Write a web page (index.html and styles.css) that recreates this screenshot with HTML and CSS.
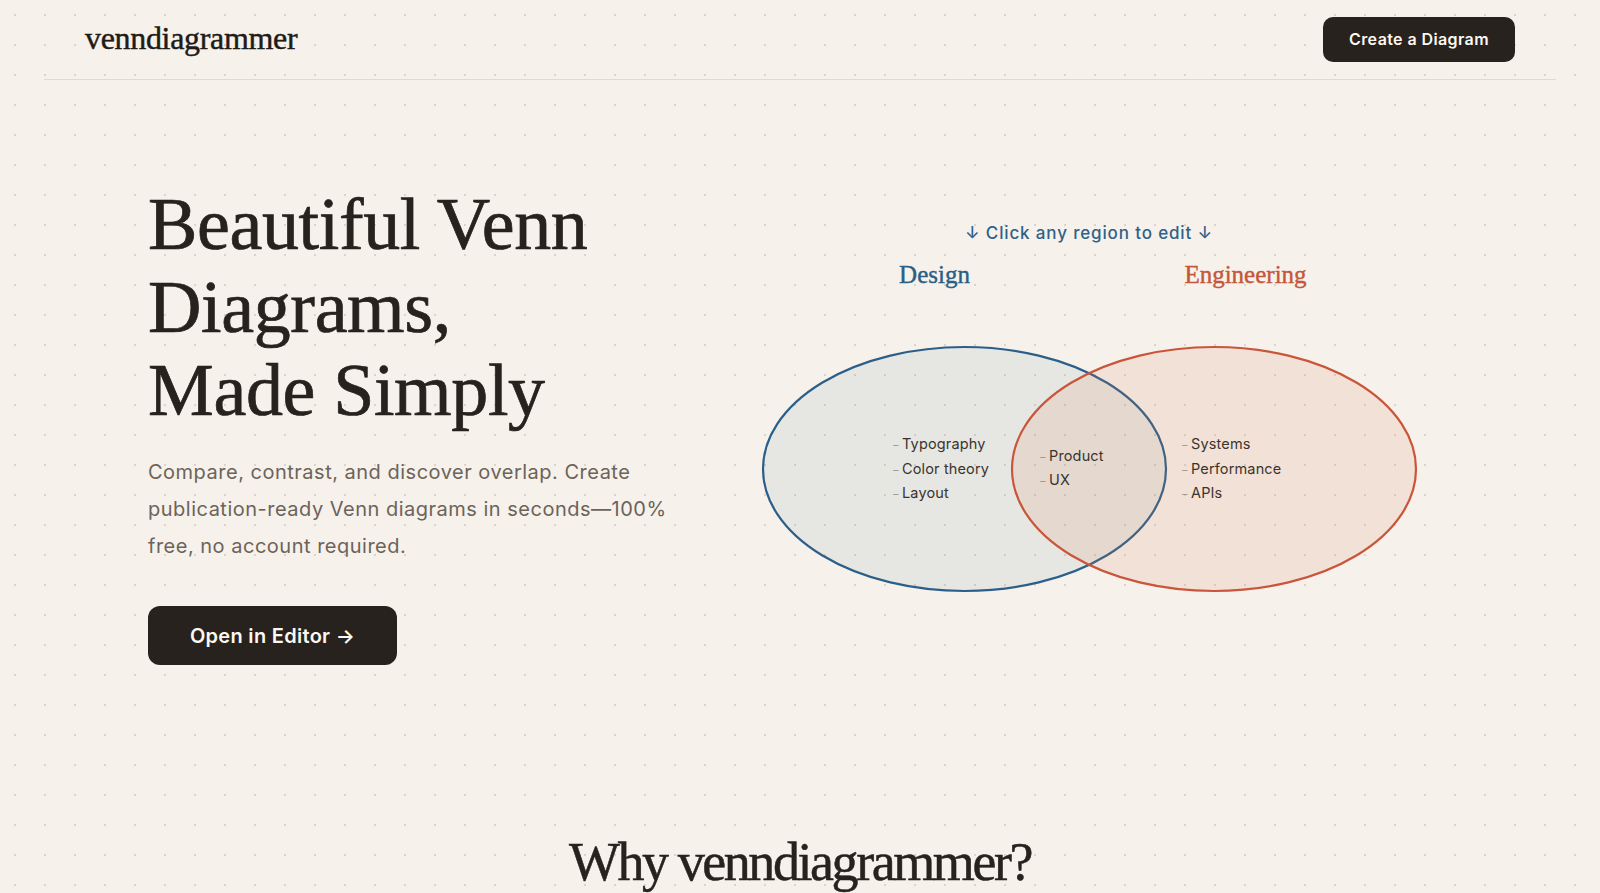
FILE: index.html
```html
<!DOCTYPE html>
<html lang="en">
<head>
<meta charset="utf-8">
<title>venndiagrammer</title>
<link rel="stylesheet" href="styles.css">
</head>
<body>
<header class="topbar">
  <a class="logo" href="#">venndiagrammer</a>
  <a class="btn btn-nav" href="#">Create a Diagram</a>
</header>

<main>
  <section class="hero">
    <div class="hero-copy">
      <h1 class="hero-title">Beautiful Venn<br>Diagrams,<br>Made Simply</h1>
      <p class="hero-text">Compare, contrast, and discover overlap. Create publication-ready Venn diagrams in seconds—100% free, no account required.</p>
      <a class="btn btn-hero" href="#">Open in Editor →</a>
    </div>
    <div class="hero-diagram">
      <p class="diagram-hint">↓ Click any region to edit ↓</p>
      <svg class="venn" viewBox="0 0 728 360" width="728" height="360" aria-label="Venn diagram">
        <text class="set-label set-a" x="209.5" y="33" text-anchor="middle">Design</text>
        <text class="set-label set-b" x="520.5" y="33" text-anchor="middle">Engineering</text>
        <ellipse class="circle-a" cx="239.5" cy="219" rx="201.5" ry="122"/>
        <ellipse class="circle-b" cx="489" cy="219" rx="202" ry="122"/>
        <g class="items">
          <text x="168" y="199"><tspan class="dash">–</tspan><tspan x="177">Typography</tspan></text>
          <text x="168" y="224"><tspan class="dash">–</tspan><tspan x="177">Color theory</tspan></text>
          <text x="168" y="248"><tspan class="dash">–</tspan><tspan x="177">Layout</tspan></text>
          <text x="315" y="211"><tspan class="dash">–</tspan><tspan x="324">Product</tspan></text>
          <text x="315" y="235"><tspan class="dash">–</tspan><tspan x="324">UX</tspan></text>
          <text x="457" y="199"><tspan class="dash">–</tspan><tspan x="466">Systems</tspan></text>
          <text x="457" y="224"><tspan class="dash">–</tspan><tspan x="466">Performance</tspan></text>
          <text x="457" y="248"><tspan class="dash">–</tspan><tspan x="466">APIs</tspan></text>
        </g>
      </svg>
    </div>
  </section>

  <section class="why">
    <h2 class="why-title">Why venndiagrammer?</h2>
  </section>
</main>
</body>
</html>
```

FILE: styles.css
```css
* { box-sizing: border-box; }

html, body {
  margin: 0;
  padding: 0;
}

body {
  background-color: #f6f1eb;
  background-image: radial-gradient(circle at center, #dcd4ca 0.9px, rgba(220, 212, 202, 0) 1.4px);
  background-size: 30px 30px;
  background-position: 0 0;
  color: #27221d;
  font-family: "Inter", "Liberation Sans", sans-serif;
  overflow: hidden;
  height: 893px;
}

a { text-decoration: none; }

.topbar {
  margin: 0 44px;
  height: 80px;
  padding: 0 41px;
  border-bottom: 1px solid #e1dad1;
  display: flex;
  align-items: center;
  justify-content: space-between;
}

.logo {
  font-family: "Liberation Serif", "Times New Roman", serif;
  font-size: 32px;
  color: #1f1b17;
  letter-spacing: -0.01em;
  -webkit-text-stroke: 0.45px #1f1b17;
  margin-top: -2px;
}

.btn {
  display: inline-flex;
  align-items: center;
  justify-content: center;
  background: #27221d;
  color: #fbf7f2;
  font-family: "Inter", "Liberation Sans", sans-serif;
  font-weight: 600;
}

.btn-nav {
  width: 192px;
  height: 45px;
  border-radius: 10px;
  font-size: 16px;
  letter-spacing: 0.025em;
  margin-top: -1px;
}

.hero {
  display: grid;
  grid-template-columns: 530px 728px;
  column-gap: 47px;
  padding: 0 0 0 148px;
}

.hero-copy {
  padding-top: 103px;
}

.hero-title {
  margin: 0;
  font-family: "Liberation Serif", "Times New Roman", serif;
  font-weight: 400;
  font-size: 74px;
  line-height: 83px;
  letter-spacing: -0.005em;
  color: #27221d;
  -webkit-text-stroke: 0.7px #27221d;
}

.hero-text {
  margin: 22px 0 0;
  width: 540px;
  font-size: 20px;
  line-height: 37px;
  letter-spacing: 0.025em;
  color: #6c635a;
}

.btn-hero {
  margin-top: 41px;
  width: 249px;
  height: 59px;
  border-radius: 12px;
  font-size: 20px;
  font-weight: 600;
  letter-spacing: 0.015em;
}

.hero-diagram {
  padding-top: 140px;
  display: flex;
  flex-direction: column;
  align-items: center;
}

.diagram-hint {
  margin: 0;
  font-size: 17px;
  line-height: 27px;
  font-weight: 500;
  letter-spacing: 0.05em;
  color: #2f6189;
}

.venn {
  display: block;
  margin-top: 3px;
  overflow: visible;
}

.set-label {
  font-family: "Liberation Serif", "Times New Roman", serif;
  font-size: 25px;
  stroke-width: 0.4px;
}

.set-a { fill: #2a5f86; stroke: #2a5f86; }
.set-b { fill: #c4573b; stroke: #c4573b; }

.circle-a {
  fill: rgba(42, 95, 138, 0.075);
  stroke: #2b5f8a;
  stroke-width: 2.2;
}

.circle-b {
  fill: rgba(214, 120, 80, 0.13);
  stroke: #c9553a;
  stroke-width: 2.2;
}

.items text {
  font-family: "Inter", "Liberation Sans", sans-serif;
  font-size: 14.5px;
  fill: #3b342e;
  letter-spacing: 0.01em;
}

.items .dash {
  fill: #a39990;
  font-size: 11px;
}

.why {
  display: flex;
  justify-content: center;
  padding-top: 168px;
}

.why-title {
  margin: 0;
  font-family: "Liberation Serif", "Times New Roman", serif;
  font-weight: 400;
  font-size: 54px;
  line-height: 59px;
  letter-spacing: -0.045em;
  color: #27221d;
  -webkit-text-stroke: 0.5px #27221d;
}
```
